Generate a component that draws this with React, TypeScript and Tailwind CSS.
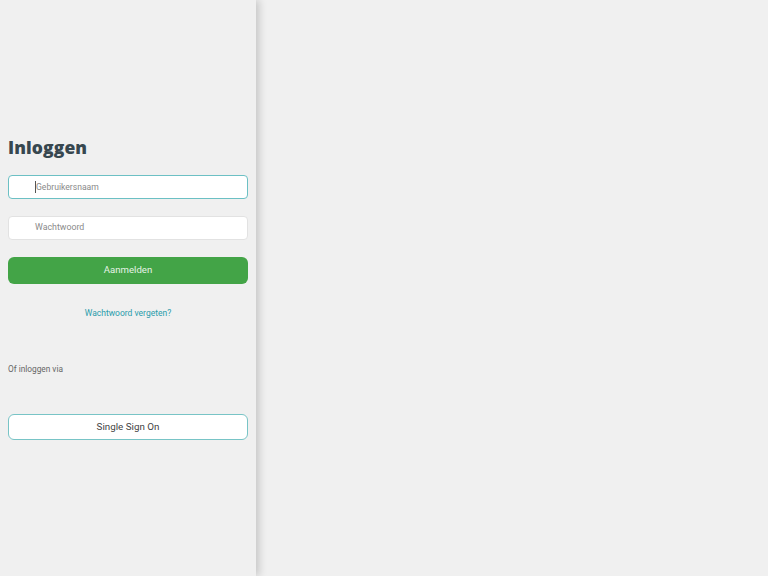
import React from 'react';

export default function App() {
  return (
    <div className="h-[576px] w-[768px] bg-[#f0f0f0] font-['Roboto',sans-serif]">
      <div className="relative flex h-full w-[256px] flex-col bg-[#f0f0f0] px-2 shadow-[3px_0_8px_rgba(0,0,0,0.18)]">
        <h1 className="mt-[135px] font-['Open_Sans',sans-serif] text-[17.5px] font-extrabold leading-[24px] tracking-[0.1px] text-[#37474f]">
          Inloggen
        </h1>

        {/* Form */}
        <div className="mt-[16px] flex h-[24px] w-[240px] items-center rounded-[4px] border border-[#6cc0c4] bg-white pl-[26px]">
          <span className="h-[12px] w-px bg-[#555]" />
          <span className="text-[8.6px] text-[#8a8a8a]">Gebruikersnaam</span>
        </div>
        <div className="mt-[17px] flex h-[24px] w-[240px] items-center rounded-[4px] border border-[#e2e2e2] bg-white pl-[26px]">
          <span className="text-[8.8px] text-[#8a8a8a]">Wachtwoord</span>
        </div>
        <button className="mt-[17px] h-[27px] w-[240px] rounded-[6px] bg-[#43a447] text-[9.6px] text-[#e6f3e6]">
          Aanmelden
        </button>
        <a className="mt-[23px] w-[240px] text-center text-[8.5px] leading-[12px] text-[#2a9cab]">
          Wachtwoord vergeten?
        </a>

        <p className="mt-[44px] text-[8.3px] leading-[12px] text-[#666]">Of inloggen via</p>

        <button className="mt-[39px] h-[26px] w-[240px] rounded-[6px] border border-[#78c4c6] bg-white text-[9.8px] text-[#444]">
          Single Sign On
        </button>
      </div>
    </div>
  );
}
